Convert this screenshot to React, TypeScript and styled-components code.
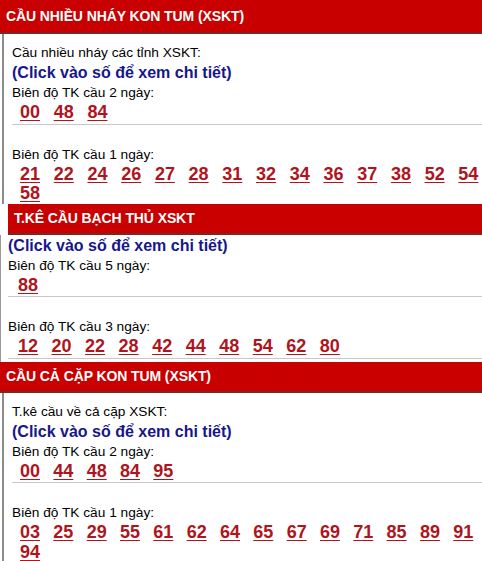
import React from "react";
import styled, { createGlobalStyle } from "styled-components";

const Global = createGlobalStyle`
  html, body { margin: 0; padding: 0; background: #fff; }
  body { font-family: Arial, "Liberation Sans", sans-serif; width: 482px; overflow: hidden; }
`;

const Page = styled.div`
  width: 482px;
  display: flex;
  flex-direction: column;
`;

const Section = styled.section<{ $inset?: boolean }>`
  display: flex;
  flex-direction: column;
  margin-left: ${(p) => (p.$inset ? "8px" : "0")};
`;

const Heading = styled.h2<{ $h: number }>`
  margin: 0;
  height: ${(p) => p.$h}px;
  box-sizing: border-box;
  background: #c80000;
  border-bottom: 2px solid #7c2626;
  color: #fff;
  font-size: 14px;
  font-weight: bold;
  display: flex;
  align-items: center;
  padding-left: 6px;
  letter-spacing: -0.1px;
`;

const Body = styled.div<{ $framed?: boolean; $pad: number }>`
  display: flex;
  flex-direction: column;
  margin-left: ${(p) => (p.$framed ? "2px" : "-8px")};
  border-left: ${(p) => (p.$framed ? "2px solid #8c8c8c" : "1px solid #9a9a9a")};
  padding: ${(p) => p.$pad}px 0 0 ${(p) => (p.$framed ? "8px" : "7px")};
`;

const Note = styled.div`
  font-size: 13.7px;
  line-height: 20px;
  color: #000;
`;

const Hint = styled.div`
  font-size: 16px;
  font-weight: bold;
  line-height: 20px;
  color: #17178a;
`;

const Numbers = styled.div<{ $indent: number; $gap: number }>`
  display: flex;
  flex-wrap: wrap;
  column-gap: ${(p) => p.$gap}px;
  padding-left: ${(p) => p.$indent}px;
`;

const Num = styled.a`
  font-size: 18px;
  font-weight: bold;
  line-height: 19.5px;
  color: #b0141c;
  text-decoration: underline;
  text-decoration-thickness: 1px;
  text-underline-offset: 2px;
  cursor: pointer;
`;

const Divider = styled.hr<{ $below: number }>`
  border: 0;
  border-top: 1px solid #c8c8c8;
  margin: 1px 0 ${(p) => p.$below}px 0;
  height: 0;
`;

type Group = { label: string; nums: string[]; rule?: number };

const NumberGroup = ({ g, indent, gap }: { g: Group; indent: number; gap: number }) => (
  <>
    <Note>{g.label}</Note>
    <Numbers $indent={indent} $gap={gap}>
      {g.nums.map((n, i) => (
        <Num key={i}>{n}</Num>
      ))}
    </Numbers>
    {g.rule !== undefined && <Divider $below={g.rule} />}
  </>
);

const s1: Group[] = [
  { label: "Biên độ TK cầu 2 ngày:", nums: ["00", "48", "84"], rule: 20 },
  {
    label: "Biên độ TK cầu 1 ngày:",
    nums: ["21", "22", "24", "26", "27", "28", "31", "32", "34", "36", "37", "38", "52", "54", "58"],
  },
];

const s2: Group[] = [
  { label: "Biên độ TK cầu 5 ngày:", nums: ["88"], rule: 20 },
  {
    label: "Biên độ TK cầu 3 ngày:",
    nums: ["12", "20", "22", "28", "42", "44", "48", "54", "62", "80"],
    rule: 3,
  },
];

const s3: Group[] = [
  { label: "Biên độ TK cầu 2 ngày:", nums: ["00", "44", "48", "84", "95"], rule: 20 },
  {
    label: "Biên độ TK cầu 1 ngày:",
    nums: ["03", "25", "29", "55", "61", "62", "64", "65", "67", "69", "71", "85", "89", "91", "94"],
  },
];

export default function App() {
  return (
    <Page>
      <Global />
      <Section>
        <Heading $h={34}>CẦU NHIỀU NHÁY KON TUM (XSKT)</Heading>
        <Body $framed $pad={9}>
          <Note>Cầu nhiều nháy các tỉnh XSKT:</Note>
          <Hint>(Click vào số để xem chi tiết)</Hint>
          {s1.map((g, i) => (
            <NumberGroup key={i} g={g} indent={8} gap={13.7} />
          ))}
        </Body>
      </Section>
      <Section $inset>
        <Heading $h={31}>T.KÊ CẦU BẠCH THỦ XSKT</Heading>
        <Body $pad={1}>
          <Hint>(Click vào số để xem chi tiết)</Hint>
          {s2.map((g, i) => (
            <NumberGroup key={i} g={g} indent={10} gap={13.5} />
          ))}
        </Body>
      </Section>
      <Section>
        <Heading $h={31}>CẦU CẢ CẶP KON TUM (XSKT)</Heading>
        <Body $framed $pad={9}>
          <Note>T.kê cầu về cả cặp XSKT:</Note>
          <Hint>(Click vào số để xem chi tiết)</Hint>
          {s3.map((g, i) => (
            <NumberGroup key={i} g={g} indent={8} gap={13.3} />
          ))}
        </Body>
      </Section>
    </Page>
  );
}
